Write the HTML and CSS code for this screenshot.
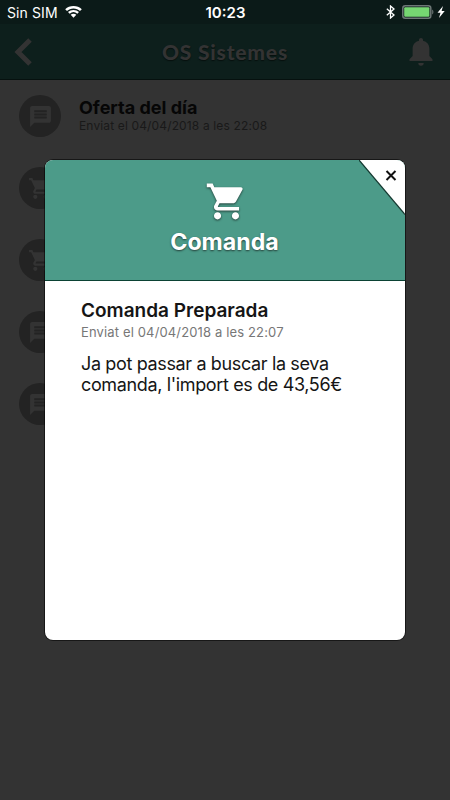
FILE: index.html
```html
<!DOCTYPE html>
<html lang="ca">
<head>
<meta charset="utf-8">
<title>OS Sistemes</title>
<link rel="stylesheet" href="styles.css">
</head>
<body>
<svg class="defs" aria-hidden="true">
  <symbol id="cart" viewBox="0 0 24 24"><path d="M7 18c-1.1 0-1.99.9-1.99 2S5.9 22 7 22s2-.9 2-2-.9-2-2-2zM1 2v2h2l3.6 7.59-1.35 2.45c-.16.28-.25.61-.25.96 0 1.1.9 2 2 2h12v-2H7.42c-.14 0-.25-.11-.25-.25l.03-.12.9-1.63h7.45c.75 0 1.41-.41 1.75-1.03l3.58-6.49A1.003 1.003 0 0 0 20 4H5.21l-.94-2H1zm16 16c-1.1 0-1.99.9-1.99 2s.89 2 1.99 2 2-.9 2-2-.9-2-2-2z"/></symbol>
  <symbol id="chat" viewBox="0 0 24 24"><path d="M20 2H4c-1.1 0-1.99.9-1.99 2L2 22l4-4h14c1.1 0 2-.9 2-2V4c0-1.1-.9-2-2-2zm-2 12H6v-2h12v2zm0-3H6V9h12v2zm0-3H6V6h12v2z"/></symbol>
</svg>
<div class="screen">
  <header class="top">
    <div class="status">
      <div class="carrier"><span class="sim">Sin SIM</span>
        <svg class="wifi" viewBox="0 0 17 12"><path d="M8.5 0C5.3 0 2.400 1.200.2 3.200L2 5C3.700 3.400 6 2.500 8.500 2.500S13.300 3.400 15 5l1.800-1.800C14.600 1.200 11.700 0 8.500 0zM8.500 3.900c-2.100 0-4 .8-5.500 2.100l1.700 1.700a5.700 5.700 0 0 1 7.600 0L14 6a8.200 8.200 0 0 0-5.500-2.100zM8.500 7.800c-1.100 0-2 .4-2.800 1L8.500 11.700l2.800-2.900c-.8-.6-1.700-1-2.800-1z"/></svg>
      </div>
      <div class="clock">10:23</div>
      <div class="power">
        <svg class="bluetooth" viewBox="0 0 9 14"><path d="M.8 3.800 8 10 4.500 13V1L8 4 .8 10.200"/></svg>
        <svg class="battery" viewBox="0 0 32 14"><rect class="case" x=".8" y=".8" width="28" height="12.400" rx="2.500"/><rect class="charge" x="2.200" y="2.200" width="25.200" height="9.600" rx="1"/><path class="tip" d="M30.200 4.500c1.600.7 1.600 4.300 0 5z"/></svg>
        <svg class="bolt" viewBox="0 0 8 12"><path d="M6 0 .5 6.800h3L2 12l5.700-7H4.600z"/></svg>
      </div>
    </div>
    <div class="nav">
      <svg class="back" viewBox="0 0 18 28"><path d="M16 2 4 14l12 12"/></svg>
      <h1 class="brand">OS Sistemes</h1>
      <svg class="bell" viewBox="0 0 24 28"><path d="M12 0c1.200 0 2 .9 2 2v.7c4 .9 6.400 4 6.400 8.300v7l3.100 3.300V23H.5v-1.700L3.600 18v-7C3.600 6.700 6 3.600 10 2.700V2c0-1.100.8-2 2-2zM9.300 25h5.400a2.700 2.700 0 0 1-5.400 0z"/></svg>
    </div>
  </header>
  <main class="list">
    <div class="item"><span class="disc"><svg class="glyph"><use href="#chat"/></svg></span>
      <div class="info"><h2>Oferta del día</h2><p>Enviat el 04/04/2018 a les 22:08</p></div></div>
    <div class="item"><span class="disc"><svg class="glyph cart"><use href="#cart"/></svg></span></div>
    <div class="item"><span class="disc"><svg class="glyph cart"><use href="#cart"/></svg></span></div>
    <div class="item"><span class="disc"><svg class="glyph"><use href="#chat"/></svg></span></div>
    <div class="item"><span class="disc"><svg class="glyph"><use href="#chat"/></svg></span></div>
  </main>
  <section class="modal">
    <div class="banner">
      <svg class="banner-icon"><use href="#cart"/></svg>
      <h2 class="kind">Comanda</h2>
      <svg class="corner" viewBox="0 0 46 55"><path class="fold" d="M0 0H46V55z"/><path class="edge" d="M0 0 46 54.500"/><path class="cross" d="m27.500 11 9 9m0-9-9 9"/></svg>
    </div>
    <div class="message">
      <h3>Comanda Preparada</h3>
      <p class="sent">Enviat el 04/04/2018 a les 22:07</p>
      <p class="text">Ja pot passar a buscar la seva<br>comanda, l'import es de 43,56€</p>
    </div>
  </section>
</div>
</body>
</html>
```

FILE: styles.css
```css
* { box-sizing: border-box; }
body, h1, h2, h3, p { margin: 0; }
body { background: #333; font-family: Inter, "Liberation Sans", sans-serif; }
svg { display: block; flex: none; }
.defs { position: absolute; width: 0; height: 0; }
.screen { position: relative; width: 450px; height: 800px; overflow: hidden; background: #333; }
.top { height: 80px; background: #0d1f1c; border-bottom: 1px solid #06110f; }
.status { height: 24px; display: grid; grid-template-columns: 1fr auto 1fr; align-items: center; padding: 1px 6px 0 7px; background: #0b1a18; color: #fff; font-size: 14px; white-space: nowrap; }
.carrier, .power { display: flex; align-items: center; }
.sim { letter-spacing: 0.1px; }
.wifi { width: 17px; height: 12px; margin: -1px 0 0 7px; fill: #fff; }
.clock { font-size: 15px; font-weight: 600; }
.power { justify-content: flex-end; }
.bluetooth { width: 9px; height: 14px; margin-right: 7px; fill: none; stroke: #fff; stroke-width: 1.3; }
.battery { width: 32px; height: 14px; }
.case { fill: none; stroke: #6d7776; stroke-width: 1.5; }
.charge { fill: #76d672; }
.tip { fill: #6d7776; }
.bolt { width: 8px; height: 12px; margin-left: 3px; fill: #fff; }
.power { position: relative; left: 1px; top: -1px; }
.nav { height: 55px; display: grid; grid-template-columns: 60px 1fr 60px; align-items: center; }
.back { width: 18px; height: 28px; margin-left: 14px; fill: none; stroke: #333; stroke-width: 5; }
.brand { text-align: center; font: 900 21px/24px Lato, sans-serif; letter-spacing: .8px; color: #333; text-shadow: 0 1px 1px #07100e; }
.bell { width: 24px; height: 28px; margin-left: 19px; fill: #333; }
.list { padding: 0 19px; }
.item { height: 72px; display: flex; align-items: center; }
.disc { width: 42px; height: 42px; flex: none; display: grid; place-items: center; border-radius: 50%; background: #232323; }
.glyph { width: 25px; height: 25px; fill: #333; }
.info { margin: -2px 0 0 18px; white-space: nowrap; }
.info h2 { font-size: 18px; line-height: 22px; font-weight: 700; color: #060606; }
.info p { font-size: 12px; line-height: 14px; letter-spacing: .14px; color: #191919; }
.modal { position: absolute; left: 45px; top: 160px; width: 360px; height: 480px; border-radius: 8px; background: #fff; overflow: hidden; }
.screen .modal { box-shadow: 0 0 0 1px #0008; }
.banner { position: relative; height: 121px; padding-top: 20px; display: flex; flex-direction: column; align-items: center; background: #4c9b89; border-bottom: 1px solid #0b4234; }
.banner-icon { width: 43px; height: 43px; margin-left: 3px; fill: #fff; filter: drop-shadow(0 1px 1px #243f39); }
.kind { margin-top: 3px; padding-right: 1px; font-size: 23.2px; line-height: 32px; font-weight: 700; color: #fff; text-shadow: 0 1px 2px #243f39; }
.corner { position: absolute; top: 0; right: 0; width: 46px; height: 55px; }
.fold { fill: #fff; }
.edge { fill: none; stroke: #12382f; stroke-width: 1.2; }
.cross { fill: none; stroke: #111; stroke-width: 2; }
.message { padding: 19px 20px 0 36px; color: #151515; white-space: nowrap; }
.message h3 { font-size: 19px; line-height: 22px; font-weight: 600; }
.sent { margin-top: 2px; font-size: 13px; line-height: 16px; letter-spacing: .14px; color: #777; }
.text { margin-top: 13px; font-size: 18px; line-height: 21px; letter-spacing: -.36px; }
```
